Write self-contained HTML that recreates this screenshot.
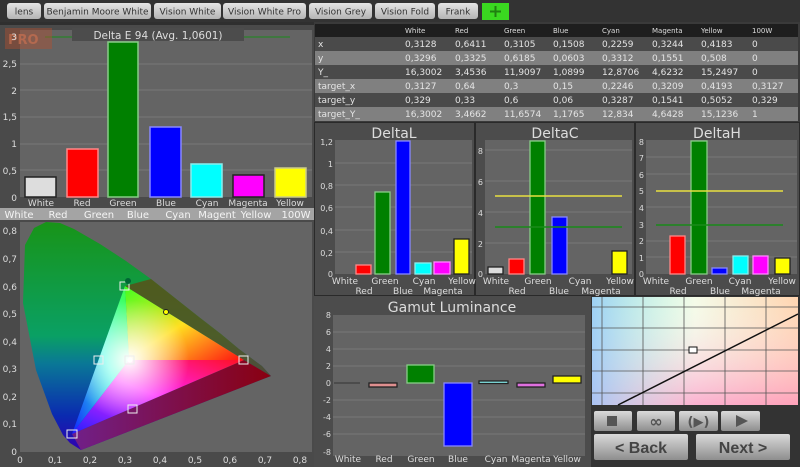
<!DOCTYPE html>
<html><head><meta charset="utf-8"><style>
html,body{margin:0;padding:0;background:#2f2f2f;width:800px;height:467px;overflow:hidden}
svg{display:block;font-family:"DejaVu Sans","Liberation Sans",sans-serif}
</style></head><body>
<svg width="800" height="467" viewBox="0 0 800 467" xmlns="http://www.w3.org/2000/svg">
<defs>
<linearGradient id="tab" x1="0" y1="0" x2="0" y2="1"><stop offset="0" stop-color="#e4e4e4"/><stop offset="1" stop-color="#b4b4b4"/></linearGradient>
<linearGradient id="btn" x1="0" y1="0" x2="0" y2="1"><stop offset="0" stop-color="#dadada"/><stop offset="1" stop-color="#8e8e8e"/></linearGradient>
<linearGradient id="loc" x1="0" y1="0" x2="0" y2="1"><stop offset="0" stop-color="#189418"/><stop offset="0.5" stop-color="#0aa064"/><stop offset="0.62" stop-color="#0a7896"/><stop offset="0.85" stop-color="#0a2ab0"/><stop offset="1" stop-color="#3000b0"/></linearGradient>
<linearGradient id="rr" x1="0" y1="0" x2="1" y2="0"><stop offset="0" stop-color="#70208a"/><stop offset="1" stop-color="#8a0010"/></linearGradient>
<linearGradient id="gR" x1="0" y1="0" x2="1" y2="1"><stop offset="0" stop-color="#40ff20"/><stop offset="0.5" stop-color="#ffe020"/><stop offset="1" stop-color="#ff1010"/></linearGradient>
<linearGradient id="gB" x1="1" y1="0" x2="0" y2="1"><stop offset="0" stop-color="#40ff40"/><stop offset="0.45" stop-color="#30ffe0"/><stop offset="1" stop-color="#1020ff"/></linearGradient>
<linearGradient id="bR" x1="0" y1="1" x2="1" y2="0"><stop offset="0" stop-color="#2020ff"/><stop offset="0.5" stop-color="#ff20ff"/><stop offset="1" stop-color="#ff1020"/></linearGradient>
<radialGradient id="wh" cx="129" cy="360" r="60" gradientUnits="userSpaceOnUse"><stop offset="0" stop-color="#fff" stop-opacity="1"/><stop offset="1" stop-color="#fff" stop-opacity="0"/></radialGradient>
<linearGradient id="pal1" x1="0" y1="0" x2="1" y2="0"><stop offset="0" stop-color="#90f0c8"/><stop offset="0.5" stop-color="#f4fbe8"/><stop offset="1" stop-color="#ffd4b0"/></linearGradient>
<linearGradient id="pal2" x1="0" y1="0" x2="0" y2="1"><stop offset="0" stop-color="#fff" stop-opacity="0"/><stop offset="1" stop-color="#ff80c0" stop-opacity="0.6"/></linearGradient>
<linearGradient id="pal3" x1="0" y1="0" x2="1" y2="0"><stop offset="0" stop-color="#a0c8ff" stop-opacity="0.8"/><stop offset="0.5" stop-color="#fff" stop-opacity="0"/></linearGradient>
</defs>

<!-- top bar -->
<rect x="0" y="0" width="800" height="22" fill="#333"/>
<g font-size="9" fill="#333" text-anchor="middle">
<rect x="7" y="3" width="34" height="16" rx="3" fill="url(#tab)"/><text x="24" y="14.5">lens</text>
<rect x="44" y="3" width="107" height="16" rx="3" fill="url(#tab)"/><text x="97.5" y="14.5">Benjamin Moore White</text>
<rect x="154" y="3" width="67" height="16" rx="3" fill="url(#tab)"/><text x="187.5" y="14.5">Vision White</text>
<rect x="223" y="3" width="83" height="16" rx="3" fill="url(#tab)"/><text x="264.5" y="14.5">Vision White Pro</text>
<rect x="309" y="3" width="63" height="16" rx="3" fill="url(#tab)"/><text x="340.5" y="14.5">Vision Grey</text>
<rect x="375" y="3" width="60" height="16" rx="3" fill="url(#tab)"/><text x="405" y="14.5">Vision Fold</text>
<rect x="438" y="3" width="40" height="16" rx="3" fill="url(#tab)"/><text x="458" y="14.5">Frank</text>
</g>
<rect x="482" y="3" width="27" height="17" fill="#3ad820"/>
<path d="M495.5 6v11M490 11.5h11" stroke="#208010" stroke-width="2"/>

<!-- Delta E panel -->
<rect x="0" y="25" width="314" height="195" fill="#4a4a4a"/>
<rect x="20" y="30" width="292" height="167" fill="#646464"/>
<g stroke="#777" stroke-width="1">
<line x1="20" y1="64" x2="312" y2="64"/><line x1="20" y1="90" x2="312" y2="90"/><line x1="20" y1="117" x2="312" y2="117"/><line x1="20" y1="144" x2="312" y2="144"/><line x1="20" y1="170" x2="312" y2="170"/>
</g>
<line x1="45" y1="37" x2="290" y2="37" stroke="#1a8a1a" stroke-width="1"/>
<rect x="5" y="28" width="47" height="21" fill="#b05030" opacity="0.45"/>
<text x="8" y="44" font-size="13" font-weight="bold" fill="#c87050" opacity="0.7">PRO</text>
<rect x="72" y="28" width="172" height="13" fill="#4c4c4c"/>
<text x="158" y="39" font-size="10.5" fill="#ddd" text-anchor="middle">Delta E 94 (Avg. 1,0601)</text>
<g stroke-width="1.5">
<rect x="25" y="177" width="31" height="20" fill="#ddd" stroke="#222"/>
<rect x="67" y="149" width="31" height="48" fill="#f00" stroke="#f88"/>
<rect x="108" y="42" width="30" height="155" fill="#008000" stroke="#8c8"/>
<rect x="150" y="127" width="31" height="70" fill="#00f" stroke="#88f"/>
<rect x="191" y="164" width="31" height="33" fill="#0ff" stroke="#8ee"/>
<rect x="233" y="175" width="31" height="22" fill="#f0f" stroke="#222"/>
<rect x="275" y="168" width="31" height="29" fill="#ff0" stroke="#cc8"/>
</g>
<g font-size="9" fill="#ddd" text-anchor="end">
<text x="17" y="40">3</text><text x="17" y="67">2,5</text><text x="17" y="94">2</text><text x="17" y="120">1,5</text><text x="17" y="147">1</text><text x="17" y="174">0,5</text><text x="17" y="201">0</text>
</g>
<g font-size="9" fill="#ddd" text-anchor="middle">
<text x="41" y="206">White</text><text x="82" y="206">Red</text><text x="123" y="206">Green</text><text x="166" y="206">Blue</text><text x="207" y="206">Cyan</text><text x="248" y="206">Magenta</text><text x="290" y="206">Yellow</text>
</g>
<rect x="0" y="208" width="314" height="12" fill="#a4a4a4"/>
<g font-size="10" fill="#f4f4f4" text-anchor="middle">
<text x="19" y="218">White</text><text x="58" y="218">Red</text><text x="99" y="218">Green</text><text x="138" y="218">Blue</text><text x="178" y="218">Cyan</text><text x="217" y="218">Magent</text><text x="256" y="218">Yellow</text><text x="296" y="218">100W</text>
</g>

<!-- CIE panel -->
<rect x="0" y="220" width="314" height="247" fill="#4a4a4a"/>
<rect x="20" y="222" width="292" height="230" fill="#646464"/>
<path d="M81,450 L70,443 L63,435 L52,414 L36,370 L23,303 L25,245 L34,228 L46,222 L60,223 L74,229 L100,244 L126,261 L151,279 L175,298 L199,317 L221,334 L239,349 L262,366 L271,376 Z" fill="url(#loc)"/>
<path d="M72,434 L244,360 L271,376 L81,450 Z" fill="url(#rr)"/>
<path d="M125,286 L151,279 L175,298 L199,317 L221,334 L239,349 L262,366 L271,376 L244,360 Z" fill="#6a4010" opacity="0.7"/>
<polygon points="129,360 125,286 244,360" fill="url(#gR)"/>
<polygon points="129,360 125,286 72,434" fill="url(#gB)"/>
<polygon points="129,360 72,434 244,360" fill="url(#bR)"/>
<polygon points="125,286 244,360 72,434" fill="url(#wh)"/>
<g fill="none" stroke="#eee" stroke-width="1">
<rect x="120" y="282" width="9" height="8"/><rect x="94" y="356" width="9" height="8"/><rect x="125" y="356" width="9" height="8"/><rect x="239" y="356" width="9" height="8"/><rect x="128" y="405" width="9" height="8"/><rect x="67" y="430" width="10" height="8"/>
</g>
<circle cx="128" cy="281" r="3" fill="#063"/>
<circle cx="166" cy="312" r="2.5" fill="#ff0" stroke="#222"/>
<circle cx="130" cy="360" r="2.5" fill="#fff"/>
<g font-size="9" fill="#ddd" text-anchor="end">
<text x="17" y="234">0,8</text><text x="17" y="262">0,7</text><text x="17" y="290">0,6</text><text x="17" y="317">0,5</text><text x="17" y="345">0,4</text><text x="17" y="372">0,3</text><text x="17" y="400">0,2</text><text x="17" y="427">0,1</text><text x="17" y="455">0</text>
</g>
<g font-size="9" fill="#ddd" text-anchor="middle">
<text x="20" y="463">0</text><text x="55" y="463">0,1</text><text x="90" y="463">0,2</text><text x="125" y="463">0,3</text><text x="160" y="463">0,4</text><text x="195" y="463">0,5</text><text x="230" y="463">0,6</text><text x="265" y="463">0,7</text><text x="300" y="463">0,8</text>
</g>

<!-- table -->
<rect x="314" y="22" width="486" height="100" fill="#3a3a3a"/>
<rect x="315" y="24" width="483" height="13" fill="#1e1e1e"/>
<rect x="315" y="37" width="483" height="14" fill="#4a4a4a"/>
<rect x="315" y="51" width="483" height="14" fill="#808080"/>
<rect x="315" y="65" width="483" height="14" fill="#4a4a4a"/>
<rect x="315" y="79" width="483" height="14" fill="#808080"/>
<rect x="315" y="93" width="483" height="14" fill="#4a4a4a"/>
<rect x="315" y="107" width="483" height="14" fill="#808080"/>
<g font-size="7" fill="#ddd"><text x="405" y="33">White</text><text x="455" y="33">Red</text><text x="504" y="33">Green</text><text x="553" y="33">Blue</text><text x="602" y="33">Cyan</text><text x="652" y="33">Magenta</text><text x="701" y="33">Yellow</text><text x="752" y="33">100W</text></g>
<g font-size="9" fill="#e4e4e4">
<text x="318" y="47">x</text><text x="405" y="47">0,3128</text><text x="455" y="47">0,6411</text><text x="504" y="47">0,3105</text><text x="553" y="47">0,1508</text><text x="602" y="47">0,2259</text><text x="652" y="47">0,3244</text><text x="701" y="47">0,4183</text><text x="752" y="47">0</text>
<text x="318" y="61">y</text><text x="405" y="61">0,3296</text><text x="455" y="61">0,3325</text><text x="504" y="61">0,6185</text><text x="553" y="61">0,0603</text><text x="602" y="61">0,3312</text><text x="652" y="61">0,1551</text><text x="701" y="61">0,508</text><text x="752" y="61">0</text>
<text x="318" y="75">Y_</text><text x="405" y="75">16,3002</text><text x="455" y="75">3,4536</text><text x="504" y="75">11,9097</text><text x="553" y="75">1,0899</text><text x="602" y="75">12,8706</text><text x="652" y="75">4,6232</text><text x="701" y="75">15,2497</text><text x="752" y="75">0</text>
<text x="318" y="89">target_x</text><text x="405" y="89">0,3127</text><text x="455" y="89">0,64</text><text x="504" y="89">0,3</text><text x="553" y="89">0,15</text><text x="602" y="89">0,2246</text><text x="652" y="89">0,3209</text><text x="701" y="89">0,4193</text><text x="752" y="89">0,3127</text>
<text x="318" y="103">target_y</text><text x="405" y="103">0,329</text><text x="455" y="103">0,33</text><text x="504" y="103">0,6</text><text x="553" y="103">0,06</text><text x="602" y="103">0,3287</text><text x="652" y="103">0,1541</text><text x="701" y="103">0,5052</text><text x="752" y="103">0,329</text>
<text x="318" y="117">target_Y_</text><text x="405" y="117">16,3002</text><text x="455" y="117">3,4662</text><text x="504" y="117">11,6574</text><text x="553" y="117">1,1765</text><text x="602" y="117">12,834</text><text x="652" y="117">4,6428</text><text x="701" y="117">15,1236</text><text x="752" y="117">1</text>
</g>

<!-- Delta panels -->
<rect x="314" y="122" width="486" height="174" fill="#2a2a2a"/>
<rect x="315" y="123" width="159" height="172" fill="#4c4c4c"/>
<rect x="476" y="123" width="158" height="172" fill="#4c4c4c"/>
<rect x="636" y="123" width="163" height="172" fill="#4c4c4c"/>
<g font-size="14" fill="#ddd" text-anchor="middle"><text x="394" y="138">DeltaL</text><text x="555" y="138">DeltaC</text><text x="717" y="138">DeltaH</text></g>
<rect x="335" y="140" width="137" height="134" fill="#646464"/>
<rect x="485" y="140" width="147" height="134" fill="#646464"/>
<rect x="646" y="140" width="151" height="134" fill="#646464"/>
<g stroke="#777"><line x1="335" y1="163" x2="472" y2="163"/><line x1="335" y1="185" x2="472" y2="185"/><line x1="335" y1="207" x2="472" y2="207"/><line x1="335" y1="230" x2="472" y2="230"/><line x1="335" y1="252" x2="472" y2="252"/>
<line x1="485" y1="181" x2="632" y2="181"/><line x1="485" y1="212" x2="632" y2="212"/><line x1="485" y1="243" x2="632" y2="243"/><line x1="485" y1="150" x2="632" y2="150"/>
<line x1="646" y1="157" x2="797" y2="157"/><line x1="646" y1="174" x2="797" y2="174"/><line x1="646" y1="207" x2="797" y2="207"/><line x1="646" y1="241" x2="797" y2="241"/><line x1="646" y1="257" x2="797" y2="257"/></g>
<g stroke-width="1.3">
<rect x="356" y="265" width="15" height="9" fill="#f00" stroke="#f88"/>
<rect x="375" y="192" width="15" height="82" fill="#008000" stroke="#8c8"/>
<rect x="396" y="141" width="14" height="133" fill="#00f" stroke="#88f"/>
<rect x="415" y="263" width="16" height="11" fill="#0ff" stroke="#8ee"/>
<rect x="434" y="262" width="16" height="12" fill="#f0f" stroke="#f8f"/>
<rect x="454" y="239" width="15" height="35" fill="#ff0" stroke="#222"/>
<rect x="488" y="267" width="15" height="7" fill="#ddd" stroke="#222"/>
<rect x="509" y="259" width="15" height="15" fill="#f00" stroke="#f88"/>
<rect x="530" y="141" width="15" height="133" fill="#008000" stroke="#8c8"/>
<rect x="552" y="217" width="15" height="57" fill="#00f" stroke="#88f"/>
<rect x="612" y="251" width="15" height="23" fill="#ff0" stroke="#222"/>
<rect x="670" y="236" width="15" height="38" fill="#f00" stroke="#f88"/>
<rect x="691" y="141" width="16" height="133" fill="#008000" stroke="#8c8"/>
<rect x="712" y="268" width="15" height="6" fill="#00f" stroke="#88f"/>
<rect x="733" y="256" width="15" height="18" fill="#0ff" stroke="#8ee"/>
<rect x="753" y="256" width="15" height="18" fill="#f0f" stroke="#f8f"/>
<rect x="775" y="258" width="15" height="16" fill="#ff0" stroke="#222"/>
</g>
<line x1="495" y1="196" x2="622" y2="196" stroke="#e8e040" stroke-width="1.5"/>
<line x1="495" y1="227" x2="622" y2="227" stroke="#1a8a1a" stroke-width="1.5"/>
<line x1="656" y1="191" x2="783" y2="191" stroke="#e8e040" stroke-width="1.5"/>
<line x1="656" y1="225" x2="783" y2="225" stroke="#1a8a1a" stroke-width="1.5"/>
<g font-size="8" fill="#ddd" text-anchor="end">
<text x="333" y="145">1,2</text><text x="333" y="167">1</text><text x="333" y="189">0,8</text><text x="333" y="211">0,6</text><text x="333" y="234">0,4</text><text x="333" y="256">0,2</text><text x="333" y="277">0</text>
<text x="483" y="154">8</text><text x="483" y="185">6</text><text x="483" y="216">4</text><text x="483" y="247">2</text><text x="483" y="277">0</text>
<text x="644" y="145">8</text><text x="644" y="161">7</text><text x="644" y="178">6</text><text x="644" y="194">5</text><text x="644" y="211">4</text><text x="644" y="228">3</text><text x="644" y="244">2</text><text x="644" y="261">1</text><text x="644" y="277">0</text>
</g>
<g font-size="9" fill="#ddd" text-anchor="middle">
<text x="345" y="284">White</text><text x="385" y="284">Green</text><text x="424" y="284">Cyan</text><text x="462" y="284">Yellow</text><text x="364" y="294">Red</text><text x="403" y="294">Blue</text><text x="443" y="294">Magenta</text>
<text x="496" y="284">White</text><text x="538" y="284">Green</text><text x="580" y="284">Cyan</text><text x="620" y="284">Yellow</text><text x="517" y="294">Red</text><text x="559" y="294">Blue</text><text x="601" y="294">Magenta</text>
<text x="656" y="284">White</text><text x="699" y="284">Green</text><text x="740" y="284">Cyan</text><text x="782" y="284">Yellow</text><text x="678" y="294">Red</text><text x="720" y="294">Blue</text><text x="761" y="294">Magenta</text>
</g>

<!-- Gamut luminance -->
<rect x="314" y="296" width="277" height="171" fill="#4c4c4c"/>
<text x="452" y="312" font-size="14" fill="#ddd" text-anchor="middle">Gamut Luminance</text>
<rect x="333" y="315" width="252" height="141" fill="#646464"/>
<g stroke="#777"><line x1="333" y1="332" x2="585" y2="332"/><line x1="333" y1="349" x2="585" y2="349"/><line x1="333" y1="366" x2="585" y2="366"/><line x1="333" y1="400" x2="585" y2="400"/><line x1="333" y1="417" x2="585" y2="417"/><line x1="333" y1="434" x2="585" y2="434"/></g>
<line x1="334" y1="383" x2="360" y2="383" stroke="#444" stroke-width="1.5"/>
<g stroke-width="1.3">
<rect x="369" y="383" width="28" height="4" fill="#e09090" stroke="#222"/>
<rect x="407" y="365" width="27" height="18" fill="#008000" stroke="#8c8"/>
<rect x="444" y="383" width="28" height="63" fill="#00f" stroke="#88f"/>
<rect x="479" y="381" width="29" height="2.5" fill="#8ee" stroke="#222"/>
<rect x="517" y="383" width="28" height="4" fill="#e070e0" stroke="#222"/>
<rect x="553" y="376" width="28" height="7" fill="#ff0" stroke="#222"/>
</g>
<g font-size="8" fill="#ddd" text-anchor="end">
<text x="331" y="318">8</text><text x="331" y="335">6</text><text x="331" y="352">4</text><text x="331" y="369">2</text><text x="331" y="386">0</text><text x="331" y="403">-2</text><text x="331" y="420">-4</text><text x="331" y="437">-6</text><text x="331" y="455">-8</text>
</g>
<g font-size="9" fill="#ddd" text-anchor="middle">
<text x="348" y="462">White</text><text x="384" y="462">Red</text><text x="421" y="462">Green</text><text x="458" y="462">Blue</text><text x="496" y="462">Cyan</text><text x="531" y="462">Magenta</text><text x="567" y="462">Yellow</text>
</g>

<!-- color palette chart -->
<rect x="591" y="296" width="209" height="171" fill="#333"/>
<rect x="592" y="297" width="206" height="108" fill="url(#pal1)"/>
<rect x="592" y="297" width="206" height="108" fill="url(#pal2)"/>
<rect x="592" y="297" width="206" height="108" fill="url(#pal3)"/>
<g stroke="#555" stroke-width="0.8">
<line x1="602" y1="297" x2="602" y2="405"/><line x1="643" y1="297" x2="643" y2="405"/><line x1="684" y1="297" x2="684" y2="405"/><line x1="725" y1="297" x2="725" y2="405"/><line x1="766" y1="297" x2="766" y2="405"/>
<line x1="592" y1="307" x2="798" y2="307"/><line x1="592" y1="328" x2="798" y2="328"/><line x1="592" y1="350" x2="798" y2="350"/><line x1="592" y1="371" x2="798" y2="371"/><line x1="592" y1="393" x2="798" y2="393"/>
</g>
<line x1="618" y1="405" x2="798" y2="314" stroke="#111" stroke-width="1.5"/>
<rect x="689" y="347" width="8" height="6" fill="#fff" stroke="#111"/>
<g>
<rect x="594" y="411" width="38" height="20" rx="2" fill="url(#btn)"/><rect x="607" y="416" width="10" height="10" fill="#555"/>
<rect x="637" y="411" width="38" height="20" rx="2" fill="url(#btn)"/><text x="656" y="427" font-size="16" font-weight="bold" fill="#555" text-anchor="middle">∞</text>
<rect x="679" y="411" width="39" height="20" rx="2" fill="url(#btn)"/><text x="698.5" y="426" font-size="13" font-weight="bold" fill="#555" text-anchor="middle">(▶)</text>
<rect x="721" y="411" width="39" height="20" rx="2" fill="url(#btn)"/><path d="M736 415l12 6-12 6z" fill="#555"/>
<rect x="594" y="434" width="94" height="26" rx="2" fill="url(#btn)"/><text x="641" y="453" font-size="16" font-weight="bold" fill="#444" text-anchor="middle" font-family="Liberation Sans">&lt; Back</text>
<rect x="696" y="434" width="94" height="26" rx="2" fill="url(#btn)"/><text x="743" y="453" font-size="16" font-weight="bold" fill="#444" text-anchor="middle" font-family="Liberation Sans">Next  &gt;</text>
</g>
</svg>
</body></html>
